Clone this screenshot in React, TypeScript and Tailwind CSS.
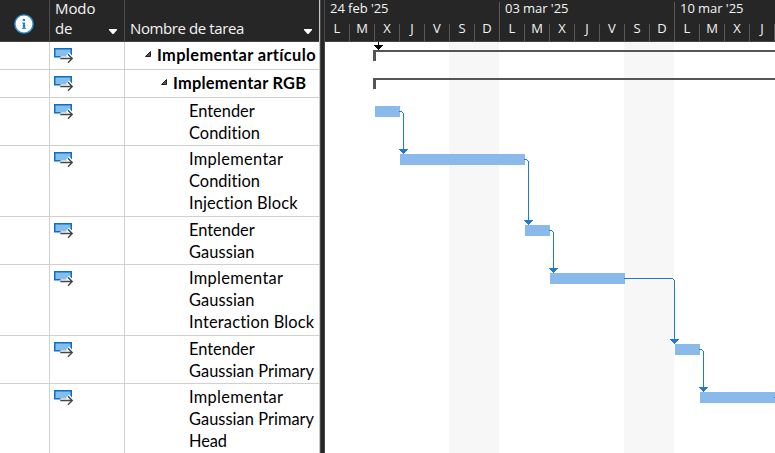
import { Fragment } from "react";

type Task = { lines: string[]; height: string; tracking: string[] };

const tasks: Task[] = [
  { lines: ["Entender", "Condition"], height: "h-12", tracking: ["tracking-[0px]", "tracking-[0.05px]"] },
  { lines: ["Implementar", "Condition", "Injection Block"], height: "h-[71px]", tracking: ["tracking-[0.32px]", "tracking-[0.05px]", "tracking-[0.16px]"] },
  { lines: ["Entender", "Gaussian"], height: "h-12", tracking: ["tracking-[0px]", "tracking-[0.1px]"] },
  { lines: ["Implementar", "Gaussian", "Interaction Block"], height: "h-[71px]", tracking: ["tracking-[0.32px]", "tracking-[0.1px]", "tracking-[0.2px]"] },
  { lines: ["Entender", "Gaussian Primary"], height: "h-12", tracking: ["tracking-[0px]", "tracking-[0.04px]"] },
  { lines: ["Implementar", "Gaussian Primary", "Head"], height: "h-[71px]", tracking: ["tracking-[0.32px]", "tracking-[0.04px]", "tracking-[-0.1px]"] },
];

const weeks = [
  { label: "24 feb '25", days: ["L", "M", "X", "J", "V", "S", "D"] },
  { label: "03 mar '25", days: ["L", "M", "X", "J", "V", "S", "D"] },
  { label: "10 mar '25", days: ["L", "M", "X", "J"] },
];

const bars = [
  [50, 64, 25],
  [75, 112, 125],
  [200, 183, 25],
  [225, 231, 75],
  [350, 302, 25],
  [375, 350, 75],
];

// [start x, start y, drop x, arrow tip y]
const links = [
  [74, 69, 78, 112],
  [199, 117, 203, 183],
  [224, 188, 228, 231],
  [299, 236, 349, 302],
  [374, 307, 378, 350],
];

function ModeIcon() {
  return (
    <svg width="20" height="17" viewBox="0 0 20 17" className="block">
      <rect x="0.75" y="0.75" width="16.5" height="8" fill="#83beec" stroke="#0f6fc0" strokeWidth="1.5" />
      <path d="M13.6 6l4.4 4.4-4 3.9M6.5 10.4h11" fill="none" stroke="#fff" strokeWidth="4.2" />
      <path d="M6.3 10.5h12M14 6.3l4.2 4.2-4.2 4.2" fill="none" stroke="#444" strokeWidth="1.4" />
    </svg>
  );
}

function InfoIcon() {
  return (
    <svg width="20" height="20" viewBox="0 0 20 20">
      <circle cx="10" cy="10" r="9.1" fill="#fff" stroke="#2f93d3" strokeWidth="1.4" />
      <path d="M8.8 5h2.3v2.1H8.8zM8.2 8.4h2.9v5.4h1v1H8v-1h.9V9.4h-.7z" fill="#1b82c8" />
    </svg>
  );
}

function DropArrow() {
  return (
    <svg width="8" height="5" viewBox="0 0 8 5">
      <path d="M0 0h8v1L4.5 5h-1L0 1z" fill="#fff" />
    </svg>
  );
}

function Cells() {
  return (
    <>
      <div className="w-[50px] border-r border-[#d0d0d0]" />
      <div className="w-[75px] border-r border-[#d0d0d0] pl-1 pt-[6px]">
        <ModeIcon />
      </div>
    </>
  );
}

function Summary({ label, indent, text }: { label: string; indent: string; text: string }) {
  return (
    <div className="flex h-7 shrink-0 border-b border-[#d0d0d0]">
      <Cells />
      <div className={`flex ${indent}`}>
        <svg width="6" height="6" viewBox="0 0 6 6" className="mt-[9px] shrink-0">
          <path d="M5.5.5v5h-5z" fill="#555" stroke="#222" strokeWidth="1" />
        </svg>
        <span className={`ml-[6px] mt-[2px] whitespace-nowrap font-bold leading-[22px] ${text}`}>{label}</span>
      </div>
    </div>
  );
}

function TaskTable() {
  return (
    <section className="flex w-80 shrink-0 flex-col border-r border-[#c8c8c8]">
      <header className="flex h-[42px] shrink-0 border-b border-[#444] bg-[#262626] font-['Open_Sans',sans-serif] text-[15px] text-[#f4f4f4]">
        <div className="flex w-[50px] items-center justify-center border-r border-[#4c4c4c] pr-px pt-[7px]">
          <InfoIcon />
        </div>
        <div className="flex w-[75px] items-end justify-between border-r border-[#4c4c4c] pb-[7px] pl-[5px] pr-[7px]">
          <span className="-mb-1 flex flex-col leading-5 tracking-[-0.1px]">
            <span className="h-[19px] leading-[18px]">Modo</span>
            <span>de</span>
          </span>
          <DropArrow />
        </div>
        <div className="flex flex-1 items-end justify-between pb-[7px] pl-[5px] pr-[7px]">
          <span className="-mb-1 whitespace-nowrap leading-5 tracking-[-0.4px]">Nombre de tarea</span>
          <DropArrow />
        </div>
      </header>
      <div className="flex flex-col font-['Lato',sans-serif] text-[16.4px] text-black [font-variant-ligatures:none]">
        <Summary label="Implementar artículo" indent="pl-[20px]" text="tracking-[0.36px]" />
        <Summary label="Implementar RGB" indent="pl-[36px]" text="tracking-[0.25px]" />
        {tasks.map((task, i) => (
          <div key={i} className={`flex shrink-0 border-b border-[#d0d0d0] ${task.height}`}>
            <Cells />
            <div className="flex flex-col pl-16 pt-[2px]">
              {task.lines.map((line, j) => (
                <span key={j} className={`whitespace-nowrap leading-[22px] ${task.tracking[j]}`}>{line}</span>
              ))}
            </div>
          </div>
        ))}
      </div>
    </section>
  );
}

function Timeline() {
  return (
    <section className="flex w-[450px] shrink-0 flex-col">
      <header className="flex h-[42px] shrink-0 border-b border-[#444] bg-[#262626] font-['Open_Sans',sans-serif] text-[13px] text-[#f4f4f4]">
        {weeks.map((week, w) => (
          <div key={week.label} className="flex w-[175px] shrink-0 flex-col pt-[2px]">
            <div className="flex h-[22px]">
              <span className="flex-1 whitespace-nowrap pl-[5px] leading-[13px] tracking-[-0.05px]">{week.label}</span>
              {w < 2 && <i className="w-px bg-[#595959]" />}
            </div>
            <div className="flex h-[17px]">
              {week.days.map((day, d) => (
                <span key={d} className="w-[25px] border-r border-[#595959] text-center leading-[8px]">{day}</span>
              ))}
            </div>
          </div>
        ))}
      </header>
      <svg width="450" height="411" viewBox="0 0 450 411" className="block shrink-0" shapeRendering="crispEdges">
        <path d="M124 0h50v411h-50zM299 0h50v411h-50z" fill="#f7f7f7" />
        <path d="M48 8h402v2H51v9h-3zM48 36h402v2H51v9h-3z" fill="#555" />
        <path d="M53 0h1v3h4v1h-1v1h-1v1h-1v1h-1v1h-1V7h-1V6h-1V5h-1V4h-1V3h4z" fill="#000" />
        {bars.map(([x, y, width]) => (
          <rect key={y} x={x} y={y} width={width} height="11" fill="#8abaeb" />
        ))}
        {links.map(([x, y, drop, tip]) => (
          <Fragment key={y}>
            <path
              d={`M${x} ${y}H${drop - 1}v1H${x}zM${drop - 1} ${y + 1}h1v1h-1zM${drop} ${y + 2}h1V${tip}h-1z`}
              fill="#2279cf"
            />
            <path
              d={`M${drop - 4} ${tip - 5}h9v1h-1v1h-1v1h-1v1h-1v1h-1v-1h-1v-1h-1v-1h-1v-1h-1z`}
              fill="#2279cf"
            />
          </Fragment>
        ))}
        <rect x="449" y="355" width="1" height="1" fill="#2279cf" />
      </svg>
    </section>
  );
}

export default function App() {
  return (
    <main className="flex h-[453px] w-[775px] overflow-hidden bg-white">
      <TaskTable />
      <div className="w-[5px] shrink-0 border-x border-[#484848] bg-[#262626]" />
      <Timeline />
    </main>
  );
}
